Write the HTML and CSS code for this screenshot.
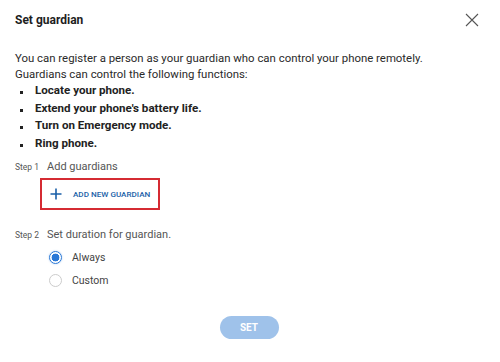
FILE: index.html
```html
<!DOCTYPE html>
<html lang="en">
<head>
    <meta charset="UTF-8">
    <title>Set guardian</title>
    <link rel="stylesheet" href="styles.css">
</head>
<body>
    <div class="dialog">
        <div class="dialog-header">
            <h1 class="dialog-title">Set guardian</h1>
            <button class="close-button" aria-label="Close">
                <svg width="14" height="14" viewBox="0 0 14 14">
                    <path d="M1 1 L13 13 M13 1 L1 13" stroke="#555" stroke-width="1.1" fill="none"/>
                </svg>
            </button>
        </div>
        <p class="intro">You can register a person as your guardian who can control your phone remotely.<br>Guardians can control the following functions:</p>
        <ul class="functions">
            <li>Locate your phone.</li>
            <li>Extend your phone's battery life.</li>
            <li>Turn on Emergency mode.</li>
            <li>Ring phone.</li>
        </ul>
        <div class="step">
            <span class="step-label">Step 1</span>
            <span class="step-text">Add guardians</span>
        </div>
        <div class="add-row">
            <button class="add-guardian">
                <svg width="12" height="12" viewBox="0 0 12 12">
                    <path d="M6 0.5 V11.5 M0.5 6 H11.5" stroke="#1a5fa8" stroke-width="1.6" fill="none"/>
                </svg>
                <span>ADD NEW GUARDIAN</span>
            </button>
        </div>
        <div class="step step-two">
            <span class="step-label">Step 2</span>
            <span class="step-text">Set duration for guardian.</span>
        </div>
        <div class="options">
            <label class="option"><span class="radio checked"></span>Always</label>
            <label class="option"><span class="radio"></span>Custom</label>
        </div>
        <div class="actions">
            <button class="set-button">SET</button>
        </div>
    </div>
</body>
</html>
```

FILE: styles.css
```css
body {
    margin: 0;
    padding: 0;
    background: #fff;
    font-family: Roboto, "Liberation Sans", sans-serif;
    color: #252525;
}
.dialog {
    width: 500px;
    height: 362px;
    box-sizing: border-box;
    padding: 13px 15px 0 15px;
}
.dialog-header {
    display: flex;
    justify-content: space-between;
    align-items: center;
    height: 14px;
}
.dialog-title {
    margin: 0;
    font-size: 12px;
    font-weight: 700;
    color: #1e1e1e;
}
.close-button {
    border: none;
    background: none;
    padding: 0;
    margin-right: 6px;
    display: flex;
}
.intro {
    margin: 23px 0 0 0;
    font-size: 11.4px;
    line-height: 16px;
    color: #2a2a2a;
}
.functions {
    list-style: none;
    margin: 0;
    padding: 0;
}
.functions li {
    position: relative;
    padding-left: 20px;
    font-size: 11.6px;
    font-weight: 700;
    line-height: 17.5px;
    color: #222;
}
.functions li::before {
    content: "";
    position: absolute;
    left: 5px;
    top: 9px;
    width: 3px;
    height: 3px;
    background: #222;
}
.step {
    display: flex;
    align-items: baseline;
    gap: 8px;
    margin-top: 8px;
}
.step-two {
    margin-top: 18px;
}
.step-label {
    font-size: 8.5px;
    color: #555;
}
.step-text {
    font-size: 11px;
    color: #555;
}
.add-row {
    margin: 5px 0 0 25px;
}
.add-guardian {
    display: flex;
    align-items: center;
    gap: 11px;
    width: 120px;
    height: 32px;
    box-sizing: border-box;
    border: 2px solid #d52b33;
    background: #fff;
    padding: 0 0 0 8px;
    font-family: Roboto, "Liberation Sans", sans-serif;
    font-size: 8.1px;
    font-weight: 500;
    color: #1a5fa8;
}
.options {
    display: flex;
    flex-direction: column;
    gap: 8px;
    margin: 9px 0 0 34px;
}
.option {
    display: flex;
    align-items: center;
    gap: 10px;
    font-size: 10.5px;
    color: #444;
    height: 15px;
}
.radio {
    width: 13px;
    height: 13px;
    border: 1px solid #ccc;
    border-radius: 50%;
    box-sizing: border-box;
}
.radio.checked {
    border: 1.5px solid #2a78d6;
    background: radial-gradient(circle, #2a78d6 0 3.6px, #fff 4.2px);
    box-shadow: 0 0 2px rgba(42, 120, 214, 0.4);
}
.actions {
    display: flex;
    justify-content: center;
    margin-top: 28px;
    padding-right: 2px;
}
.set-button {
    width: 59px;
    height: 23px;
    border: none;
    border-radius: 12px;
    background: #9fc2ea;
    color: #fff;
    font-family: Roboto, "Liberation Sans", sans-serif;
    font-size: 10px;
    font-weight: 700;
}
```
